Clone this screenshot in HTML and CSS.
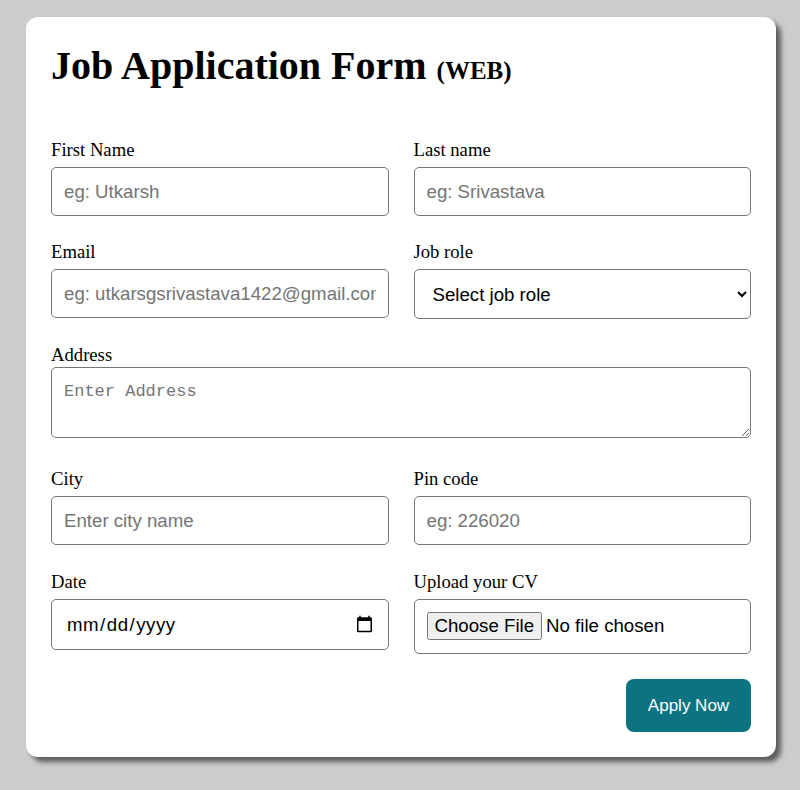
FILE: index.html
```html
<!DOCTYPE html>
<html>
<head>
<meta charset="utf-8">
<link rel="stylesheet" href="styles.css">
</head>
<body>
<div class="card">
  <h1 class="title">Job Application Form <span class="tag">(WEB)</span></h1>
  <form class="form">
    <div class="field">
      <label class="label">First Name</label>
      <input class="control" type="text" placeholder="eg: Utkarsh">
    </div>
    <div class="field">
      <label class="label">Last name</label>
      <input class="control" type="text" placeholder="eg: Srivastava">
    </div>
    <div class="field">
      <label class="label">Email</label>
      <input class="control" type="email" placeholder="eg: utkarsgsrivastava1422@gmail.com">
    </div>
    <div class="field">
      <label class="label">Job role</label>
      <select class="control select">
        <option>Select job role</option>
      </select>
    </div>
    <div class="field wide address">
      <label class="label label-tight">Address</label>
      <textarea class="area" placeholder="Enter Address"></textarea>
    </div>
    <div class="field">
      <label class="label">City</label>
      <input class="control" type="text" placeholder="Enter city name">
    </div>
    <div class="field">
      <label class="label">Pin code</label>
      <input class="control" type="text" placeholder="eg: 226020">
    </div>
    <div class="field lower">
      <label class="label">Date</label>
      <input class="control date" type="date">
    </div>
    <div class="field lower">
      <label class="label">Upload your CV</label>
      <input class="control file" type="file">
    </div>
    <div class="actions wide">
      <button class="apply" type="button">Apply Now</button>
    </div>
  </form>
</div>
</body>
</html>
```

FILE: styles.css
```css
html, body {
  margin: 0;
  padding: 0;
}
body {
  background: #cccccc;
  font-family: "Liberation Serif", "Times New Roman", serif;
  padding: 17px 24px 33px 26px;
}
.card {
  width: 750px;
  box-sizing: border-box;
  background: #ffffff;
  border-radius: 12px;
  padding: 26px 25px 25px 25px;
  box-shadow: 5px 5px 5px rgba(0, 0, 0, 0.55);
}
.title {
  margin: 0 0 46px 0;
  font-size: 40px;
  font-weight: bold;
  line-height: 46px;
}
.tag {
  font-size: 25px;
}
.form {
  display: grid;
  grid-template-columns: 1fr 1fr;
  column-gap: 25px;
  row-gap: 26px;
}
.wide {
  grid-column: 1 / 3;
}
.address {
  margin-bottom: 1px;
}
.lower {
  margin-top: 1px;
}
.label {
  display: block;
  font-size: 18.67px;
  line-height: 18px;
  padding-top: 1px;
  margin-bottom: 8px;
}
.label-tight {
  margin-bottom: 3px;
}
.control {
  display: block;
  width: 100%;
  box-sizing: border-box;
  height: 49px;
  border: 1px solid #767676;
  border-radius: 5px;
  padding: 0 12px;
  font-family: "Liberation Sans", Arial, sans-serif;
  font-size: 18.67px;
  color: #000;
  background: #fff;
}
.control::placeholder {
  color: #757575;
}
.select {
  height: 50px;
  padding-left: 14px;
}
.date {
  height: 51px;
  padding-left: 14px;
  letter-spacing: 0.5px;
}
.file {
  height: 55px;
  padding: 12px 12px;
}
.area {
  width: 100%;
  box-sizing: border-box;
  height: 71px;
  border: 1px solid #767676;
  border-radius: 5px;
  padding: 14px 12px 10px 12px;
  font-family: "Liberation Mono", "DejaVu Sans Mono", monospace;
  font-size: 17px;
  resize: vertical;
  vertical-align: baseline;
}
.area::placeholder {
  color: #757575;
}
.actions {
  display: flex;
  justify-content: flex-end;
  margin-top: -1px;
}
.apply {
  width: 125px;
  height: 53px;
  border: none;
  border-radius: 8px;
  background: #0b7480;
  color: #ffffff;
  font-family: "Liberation Sans", Arial, sans-serif;
  font-size: 17px;
}
```
